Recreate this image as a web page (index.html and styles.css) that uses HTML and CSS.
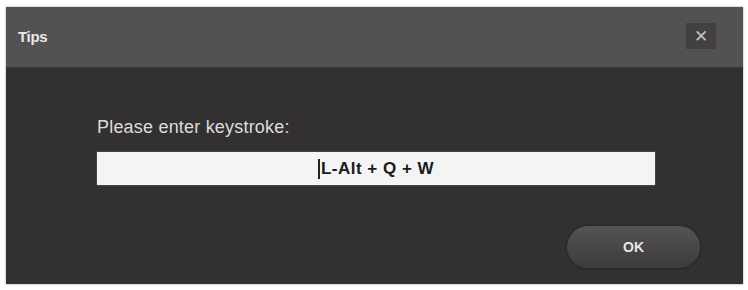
FILE: index.html
```html
<!DOCTYPE html>
<html>
<head>
<meta charset="utf-8">
<link rel="stylesheet" href="styles.css">
</head>
<body>
<div class="dialog">
  <div class="titlebar">
    <span class="title">Tips</span>
    <span class="close">✕</span>
  </div>
  <div class="content">
    <div class="label">Please enter keystroke:</div>
    <div class="input"><span class="caret"></span>L-Alt + Q + W</div>
    <div class="actions">
      <button class="ok">OK</button>
    </div>
  </div>
</div>
</body>
</html>
```
FILE: styles.css
```css
html, body {
  margin: 0;
  padding: 0;
  background: #ffffff;
}
body {
  width: 748px;
  height: 290px;
  overflow: hidden;
  font-family: "Liberation Sans", Arial, sans-serif;
}
.dialog {
  margin: 7px 0 0 6px;
  width: 737px;
  height: 277px;
  display: flex;
  flex-direction: column;
  background: #333031;
  box-shadow: 0 0 2px rgba(0,0,0,0.4);
}
.titlebar {
  height: 61px;
  background: #535151;
  display: flex;
  align-items: center;
  justify-content: space-between;
  padding: 0 27px 0 12px;
  border-bottom: 1px solid #3a3738;
  box-sizing: border-box;
}
.title {
  color: #e8e8e8;
  font-size: 15px;
  font-weight: bold;
  letter-spacing: -0.3px;
  margin-top: -2px;
}
.close {
  width: 30px;
  height: 26px;
  background: #424040;
  color: #c0c0c0;
  font-size: 17px;
  display: flex;
  align-items: center;
  justify-content: center;
  margin-top: -2px;
}
.content {
  flex: 1;
  display: flex;
  flex-direction: column;
  padding: 49px 88px 0 91px;
}
.label {
  color: #dcdcdc;
  font-size: 18px;
  letter-spacing: 0.2px;
  line-height: 20px;
}
.input {
  margin-top: 15px;
  height: 33px;
  background: #f4f4f4;
  color: #1a1a1a;
  font-size: 17px;
  font-weight: bold;
  letter-spacing: 0.5px;
  display: flex;
  align-items: center;
  justify-content: center;
  box-shadow: 0 0 2px rgba(255,255,255,0.3);
}
.caret {
  width: 2px;
  height: 20px;
  background: #222;
  margin-right: 1px;
}
.actions {
  display: flex;
  justify-content: flex-end;
  margin-top: 41px;
  margin-right: -45px;
}
.ok {
  width: 133px;
  height: 42px;
  border: none;
  border-radius: 21px;
  background: linear-gradient(#555353, #474545 55%, #3c3a3a);
  color: #e6e6e6;
  font-family: "Liberation Sans", Arial, sans-serif;
  font-size: 14px;
  font-weight: bold;
  box-shadow: 0 0 3px rgba(0,0,0,0.5);
}
```
